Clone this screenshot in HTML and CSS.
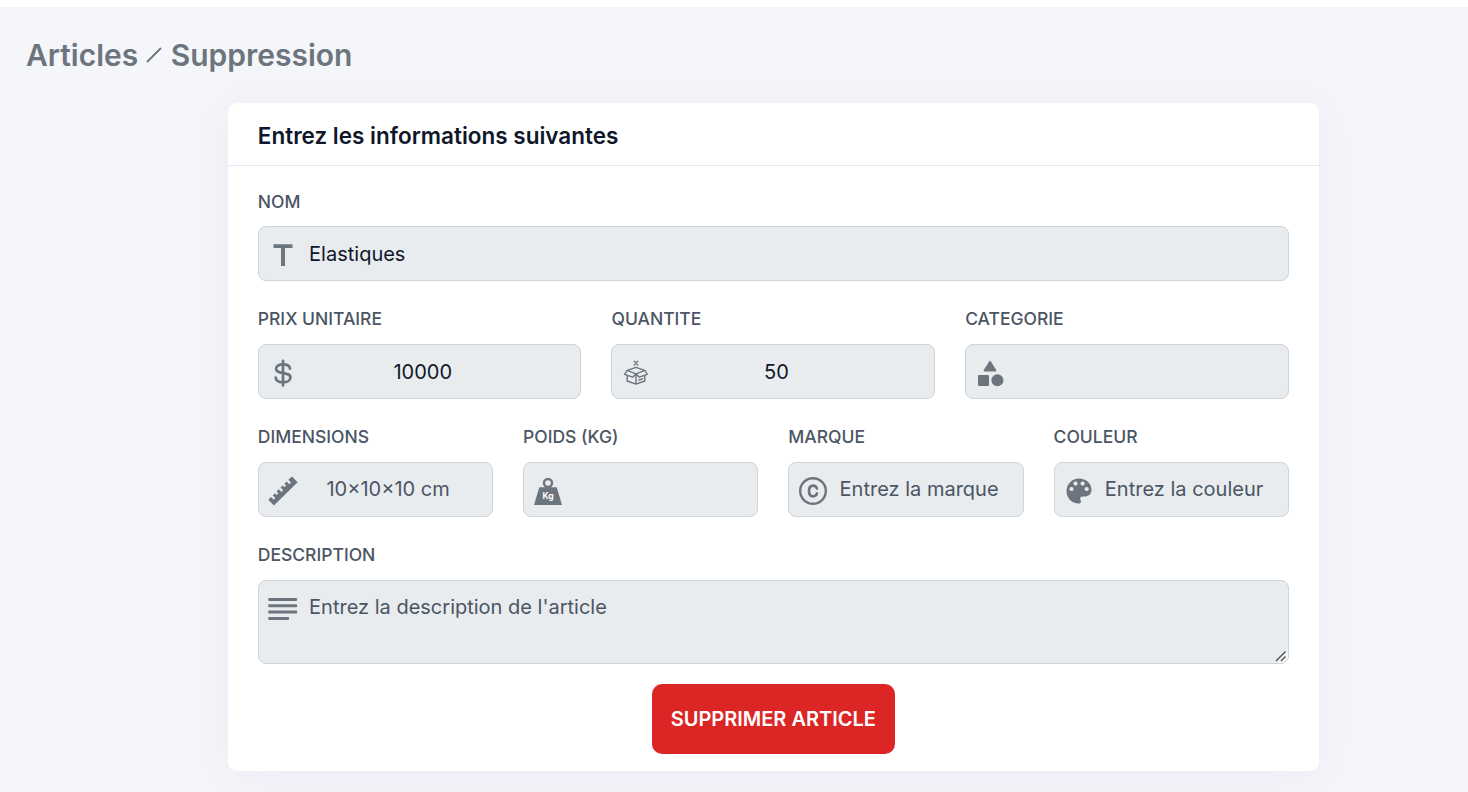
FILE: index.html
```html
<!DOCTYPE html>
<html lang="fr">
<head>
<meta charset="utf-8">
<title>Articles / Suppression</title>
<link rel="stylesheet" href="styles.css">
</head>
<body>
<main class="page">
  <h1 class="breadcrumb">
    <span>Articles</span>
    <svg class="slash" viewBox="0 0 16 16"><path d="M1.5 14.5 14.5 1.5"/></svg>
    <span>Suppression</span>
  </h1>
  <form class="card">
    <header class="card-header"><h2 class="card-title">Entrez les informations suivantes</h2></header>
    <div class="card-body">
      <div class="field">
        <label class="label" for="nom">NOM</label>
        <div class="control">
          <svg class="icon" viewBox="0 0 30 30"><path d="M5.5 4.2h19v3.800h-7.500V26h-4V8H5.500z"/></svg>
          <input class="input" id="nom" value="Elastiques" readonly>
        </div>
      </div>
      <div class="row row-3">
        <div class="field">
          <label class="label" for="prix">PRIX UNITAIRE</label>
          <div class="control">
            <svg class="icon line" viewBox="0 0 30 30"><path stroke-width="2.700" d="M15 2.800v24.600M22 10.600C21.600 7.800 19 6.400 15 6.400c-4.200 0-6.900 1.700-6.900 4.300 0 6.100 14.300 2.600 14.300 8.700 0 3-3 4.900-7.400 4.900-4.300 0-7.100-1.700-7.300-4.800"/></svg>
            <input class="input number" id="prix" value="10000" readonly>
          </div>
        </div>
        <div class="field">
          <label class="label" for="quantite">QUANTITE</label>
          <div class="control">
            <svg class="icon line" viewBox="0 0 30 30"><path stroke-width="1.400" d="m13.200 3.300 3.600 3.600m0-3.600-3.600 3.600M15 9.300 6.200 12.400 15 15.800l8.800-3.400zM6.200 12.400l-2.600 3.900 8.200 2.900 3.200-3.400 3.200 3.400 8.200-2.900-2.600-3.900M6.200 17.800v5.200L15 26.100l8.800-3.100v-5.200M15 15.800v10.300M18 22l3.600-1.200"/></svg>
            <input class="input number" id="quantite" value="50" readonly>
          </div>
        </div>
        <div class="field">
          <label class="label" for="categorie">CATEGORIE</label>
          <div class="control">
            <svg class="icon" viewBox="0 0 30 30"><path d="M14.100 3.500q.9-1.400 1.800 0l5.300 8.600q.8 1.400-.8 1.400H9.600q-1.600 0-.8-1.400z"/><rect x="3" y="16.900" width="11" height="11" rx="1.200"/><circle cx="22.400" cy="22.200" r="6"/></svg>
            <input class="input" id="categorie" readonly>
          </div>
        </div>
      </div>
      <div class="row row-4">
        <div class="field">
          <label class="label" for="dimensions">DIMENSIONS</label>
          <div class="control">
            <svg class="icon" viewBox="0 0 30 30"><path d="M.3 23.800 3 21.100l2.700 2.700 1.700-1.700-2.700-2.700 2.200-2.200 1.700 1.700 1.700-1.700-1.700-1.700 2.200-2.200 2.700 2.700 1.700-1.700-2.700-2.700 2.200-2.200 1.700 1.700 1.700-1.700-1.700-1.700 2.200-2.200 2.700 2.700 1.700-1.700-2.700-2.700L24 .6l5.600 5.600L5.900 29.400z"/></svg>
            <input class="input centered" id="dimensions" placeholder="10×10×10 cm" readonly>
          </div>
        </div>
        <div class="field">
          <label class="label" for="poids">POIDS (KG)</label>
          <div class="control">
            <svg class="icon" viewBox="0 0 30 30"><circle class="ring" cx="15" cy="7" r="4"/><path d="M6.300 11.200h17.400L29 29H1z"/><text class="kg" x="15" y="22.500">Kg</text></svg>
            <input class="input" id="poids" readonly>
          </div>
        </div>
        <div class="field">
          <label class="label" for="marque">MARQUE</label>
          <div class="control">
            <svg class="icon line" viewBox="0 0 30 30"><circle cx="15" cy="15" r="12.800" stroke-width="2.400"/><path stroke-width="2.700" d="M18.900 12.500c-.5-1.800-1.800-2.800-3.800-2.800-2.700 0-4.100 2-4.100 5.300s1.400 5.300 4.100 5.300c2 0 3.300-1 3.800-2.800"/></svg>
            <input class="input" id="marque" placeholder="Entrez la marque" readonly>
          </div>
        </div>
        <div class="field">
          <label class="label" for="couleur">COULEUR</label>
          <div class="control">
            <svg class="icon" viewBox="0 0 30 30"><path fill-rule="evenodd" d="M15 2.500C8 2.500 2.500 8 2.500 15S8 27.500 14.600 27.500c1.500 0 2.400-.9 2.400-2.100 0-1.300-.9-1.600-.9-2.900 0-1.400 1-2.100 2.600-2.100h2.500c3.800 0 6.300-2.700 6.300-6.300C27.500 7.500 22 2.500 15 2.500zM7.500 10.900a2.100 2.100 0 1 1 0 4.200 2.100 2.100 0 0 1 0-4.200zM11.500 5.500a2.100 2.100 0 1 1 0 4.200 2.100 2.100 0 0 1 0-4.200zM18.600 5.500a2.100 2.100 0 1 1 0 4.200 2.100 2.100 0 0 1 0-4.200zM22.700 10.900a2.100 2.100 0 1 1 0 4.200 2.100 2.100 0 0 1 0-4.200z"/></svg>
            <input class="input" id="couleur" placeholder="Entrez la couleur" readonly>
          </div>
        </div>
      </div>
      <div class="field">
        <label class="label" for="description">DESCRIPTION</label>
        <div class="control tall">
          <svg class="icon" viewBox="0 0 30 30"><rect x=".2" y="4" width="29" height="3" rx="1.200"/><rect x=".2" y="10.300" width="29" height="3" rx="1.200"/><rect x=".2" y="16.600" width="29" height="3" rx="1.200"/><rect x=".2" y="22.900" width="21" height="3" rx="1.200"/></svg>
          <textarea class="input area" id="description" placeholder="Entrez la description de l'article" readonly></textarea>
          <svg class="grip" viewBox="0 0 14 14"><path class="grip-corner" d="M14 3v11H3z"/><path d="M2 12 11.500 2.500M7 12 11.500 7.500"/></svg>
        </div>
      </div>
      <button class="delete" type="button">SUPPRIMER ARTICLE</button>
    </div>
  </form>
</main>
</body>
</html>
```

FILE: styles.css
```css
* { box-sizing: border-box; }
body {
  margin: 0;
  height: 792px;
  overflow: hidden;
  background: #f4f6fa;
  border-top: 7px solid #fff;
  font-family: Inter, "Liberation Sans", sans-serif;
  color: #0f172a;
}
.page { padding: 27px 0 0; }
.breadcrumb {
  display: flex;
  align-items: center;
  margin: 0 0 27px 26px;
  height: 42px;
  font-size: 30px;
  font-weight: 600;
  line-height: 42px;
  color: #6c757d;
}
.slash {
  width: 16px;
  height: 16px;
  margin: 0 8.4px 0 8px;
  fill: none;
  stroke: #6c757d;
  stroke-width: 1.8;
  stroke-linecap: round;
}
.card {
  width: 1091px;
  height: 668px;
  margin-left: 227.8px;
  background: #fff;
  border-radius: 9px;
  box-shadow: 0 5px 50px rgba(82, 63, 150, 0.06);
}
.card-header {
  height: 63px;
  padding: 0 30px;
  border-bottom: 1px solid #e6e8eb;
}
.card-title {
  margin: 0;
  font-size: 22.5px;
  font-weight: 600;
  line-height: 65px;
}
.card-body {
  display: flex;
  flex-direction: column;
  gap: 22px;
  padding: 19.5px 30px;
}
.row { display: grid; gap: 30px; }
.row-3 { grid-template-columns: repeat(3, 1fr); }
.row-4 { grid-template-columns: repeat(4, 1fr); }
.field { min-width: 0; }
.label {
  display: block;
  height: 40.75px;
  font-size: 17.5px;
  font-weight: 500;
  line-height: 32px;
  color: #4b5563;
}
.control {
  display: flex;
  position: relative;
  height: 55px;
  background: #e8ecef;
  border: 1px solid #ced4da;
  border-radius: 8px;
  overflow: hidden;
}
.control.tall { height: 84px; }
.icon {
  flex: none;
  width: 30px;
  height: 30px;
  margin: 13px 11.3px 0 9px;
  fill: #6c757d;
}
.icon.line {
  fill: none;
  stroke: #6c757d;
  stroke-linecap: round;
  stroke-linejoin: round;
}
.icon .ring { fill: none; stroke: #6c757d; stroke-width: 2.4; }
.kg { fill: #fff; font: 700 8.5px Inter, sans-serif; text-anchor: middle; }
.input {
  flex: 1;
  min-width: 0;
  padding: 0;
  border: 0;
  outline: 0;
  background: transparent;
  font: 400 20px/30px Inter, "Liberation Sans", sans-serif;
  color: #0f172a;
}
.input::placeholder { color: #4b5563; opacity: 1; }
.number { padding-right: 44px; text-align: center; }
.centered { padding-right: 25px; text-align: center; }
.area { padding-top: 11px; resize: none; }
.grip {
  position: absolute;
  right: 0;
  bottom: 0;
  width: 14px;
  height: 14px;
  fill: none;
  stroke: #4a4a4a;
  stroke-width: 1.3;
}
.grip .grip-corner { fill: #f4f6f7; stroke: none; }
.delete {
  align-self: center;
  width: 243px;
  height: 70px;
  margin-top: -1.5px;
  padding: 0;
  border: 0;
  border-radius: 10px;
  background: #dc2626;
  color: #fff;
  font: 600 20px Inter, "Liberation Sans", sans-serif;
}
```
